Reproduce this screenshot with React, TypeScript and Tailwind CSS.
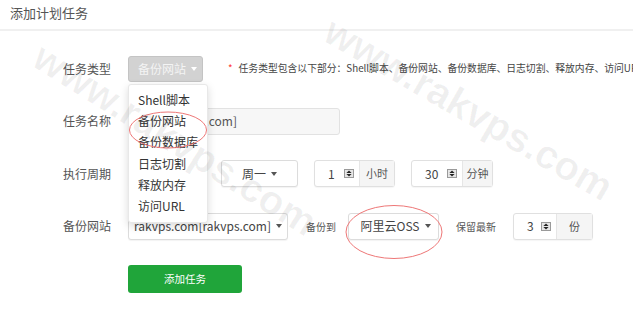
import React from "react";

function Caret({ white = false }: { white?: boolean }) {
  return (
    <span
      className={
        "inline-block h-0 w-0 shrink-0 border-l-[3.5px] border-r-[3.5px] border-t-[4px] border-l-transparent border-r-transparent " +
        (white ? "border-t-white" : "border-t-[#555]")
      }
    />
  );
}

function Spin() {
  return (
    <svg width="10" height="9" viewBox="0 0 10 9" className="shrink-0">
      <rect x="0.5" y="0.5" width="9" height="8" fill="#e6e6e6" stroke="#9a9a9a" />
      <path d="M5 1.6 L7.6 3.9 L2.4 3.9Z" fill="#222" />
      <path d="M5 7.4 L7.6 5.1 L2.4 5.1Z" fill="#222" />
    </svg>
  );
}

function NumGroup({ value, unit, inputW, unitW }: { value: string; unit: string; inputW: string; unitW: string }) {
  return (
    <div className="flex h-[27px] shrink-0 rounded-[3px] border border-[#e0e0e0] bg-white shadow-[0_1px_1px_rgba(0,0,0,0.04)]">
      <div className={"flex items-center justify-between pl-[13px] pr-[5px] text-[12px] text-[#444] " + inputW}>
        <span>{value}</span>
        <Spin />
      </div>
      <div className={"flex items-center justify-center border-l border-[#e6e6e6] bg-[#f5f5f5] text-[11px] text-[#555] " + unitW}>
        {unit}
      </div>
    </div>
  );
}

function Select({ text, cls }: { text: string; cls: string }) {
  return (
    <div
      className={
        "flex h-[27px] shrink-0 items-center justify-center gap-[5px] whitespace-nowrap rounded-[3px] border border-[#dcdcdc] bg-white text-[12px] text-[#444] shadow-[0_1px_1px_rgba(0,0,0,0.05)] " +
        cls
      }
    >
      <span>{text}</span>
      <Caret />
    </div>
  );
}

function Label({ children }: { children: React.ReactNode }) {
  return <div className="w-[111px] shrink-0 text-right text-[12px] text-[#555]">{children}</div>;
}

export default function App() {
  const menu = ["Shell脚本", "备份网站", "备份数据库", "日志切割", "释放内存", "访问URL"];
  return (
    <div className="relative h-[309px] w-[633px] overflow-hidden bg-white font-['Noto_Sans_CJK_SC','Microsoft_YaHei',sans-serif] text-[#555]">
      {/* header */}
      <div className="h-[31px] border-b-2 border-[#f0f0f0] pl-[10px] pt-[4px] text-[13px] leading-[18px] text-[#555]">
        添加计划任务
      </div>

      {/* form */}
      <div className="flex flex-col gap-[25.5px] pt-[24px]">
        {/* row 1 */}
        <div className="flex h-[27px] items-center">
          <Label>任务类型</Label>
          <div className="relative ml-[17px] shrink-0">
            <div className="flex h-[26px] w-[75px] items-center gap-[5px] whitespace-nowrap rounded-[3px] border border-[#c4c4c4] bg-[#d2d2d2] pl-[9px] text-[12px] text-[#f4f4f4]">
              <span>备份网站</span>
              <Caret white />
            </div>
            {/* dropdown */}
            <div className="absolute left-0 top-[28px] z-20 w-[80px] rounded-[3px] border border-[#e8e8e8] bg-white py-[5px] shadow-[0_3px_8px_rgba(0,0,0,0.15)]">
              {menu.map((m) => (
                <div key={m} className="flex h-[21.2px] items-center whitespace-nowrap pl-[9px] text-[12px] text-[#333]">
                  {m}
                </div>
              ))}
            </div>
          </div>
          <div className="ml-[25px] flex shrink-0 items-center whitespace-nowrap text-[9.8px] text-[#444]">
            <span className="mr-[6px] text-[#f33]">*</span>
            <span>任务类型包含以下部分：Shell脚本、备份网站、备份数据库、日志切割、释放内存、访问URL</span>
          </div>
        </div>

        {/* row 2 */}
        <div className="flex h-[27px] items-center">
          <Label>任务名称</Label>
          <div className="ml-[17px] flex h-[27px] w-[212px] shrink-0 items-center justify-end overflow-hidden rounded-[3px] border border-[#e2e2e2] bg-[#f7f7f7] pr-[102px] text-[12px] text-[#555]">
            <span className="whitespace-nowrap">备份网站[rakvps.com]</span>
          </div>
        </div>

        {/* row 3 */}
        <div className="flex h-[27px] items-center">
          <Label>执行周期</Label>
          <div className="ml-[17px] flex items-center gap-[16px]">
            <Select text="每星期" cls="w-[77px]" />
            <Select text="周一" cls="w-[77px]" />
            <NumGroup value="1" unit="小时" inputW="w-[44px]" unitW="w-[35px]" />
            <NumGroup value="30" unit="分钟" inputW="w-[50px]" unitW="w-[30px]" />
          </div>
        </div>

        {/* row 4 */}
        <div className="flex h-[27px] items-center">
          <Label>备份网站</Label>
          <div className="ml-[17px] flex items-center">
            <Select text="rakvps.com[rakvps.com]" cls="w-[160px] text-[11.5px]" />
            <span className="ml-[18px] shrink-0 text-[10px] text-[#555]">备份到</span>
            <Select text="阿里云OSS" cls="ml-[12px] w-[91px] pl-[4px] text-[12.5px]" />
            <span className="ml-[17px] shrink-0 text-[10px] text-[#555]">保留最新</span>
            <div className="ml-[17px] shrink-0">
              <NumGroup value="3" unit="份" inputW="w-[42px]" unitW="w-[36px]" />
            </div>
          </div>
        </div>

        {/* submit */}
        <div className="flex">
          <div className="ml-[128px] flex h-[28px] w-[114px] items-center justify-center rounded-[3px] bg-[#20a53a] text-[10.5px] text-white">
            添加任务
          </div>
        </div>
      </div>

      {/* red annotation ellipses */}
      <svg className="pointer-events-none absolute left-0 top-0 z-30" width="633" height="309">
        <ellipse cx="168" cy="130" rx="38.5" ry="18" fill="none" stroke="#e77" strokeWidth="1" />
        <ellipse cx="394" cy="232" rx="48" ry="26.5" fill="none" stroke="#e77" strokeWidth="1" />
      </svg>

      {/* watermarks */}
      <div className="pointer-events-none absolute left-[48px] top-[36px] z-40 origin-top-left rotate-[32deg] whitespace-nowrap font-['Liberation_Sans',sans-serif] text-[40px] font-bold leading-none text-[rgba(0,0,0,0.06)]">
        www.rakvps.com
      </div>
      <div className="pointer-events-none absolute left-[338px] top-[10px] z-40 origin-top-left rotate-[30deg] whitespace-nowrap font-['Liberation_Sans',sans-serif] text-[40px] font-bold leading-none text-[rgba(0,0,0,0.06)]">
        www.rakvps.com
      </div>
    </div>
  );
}
